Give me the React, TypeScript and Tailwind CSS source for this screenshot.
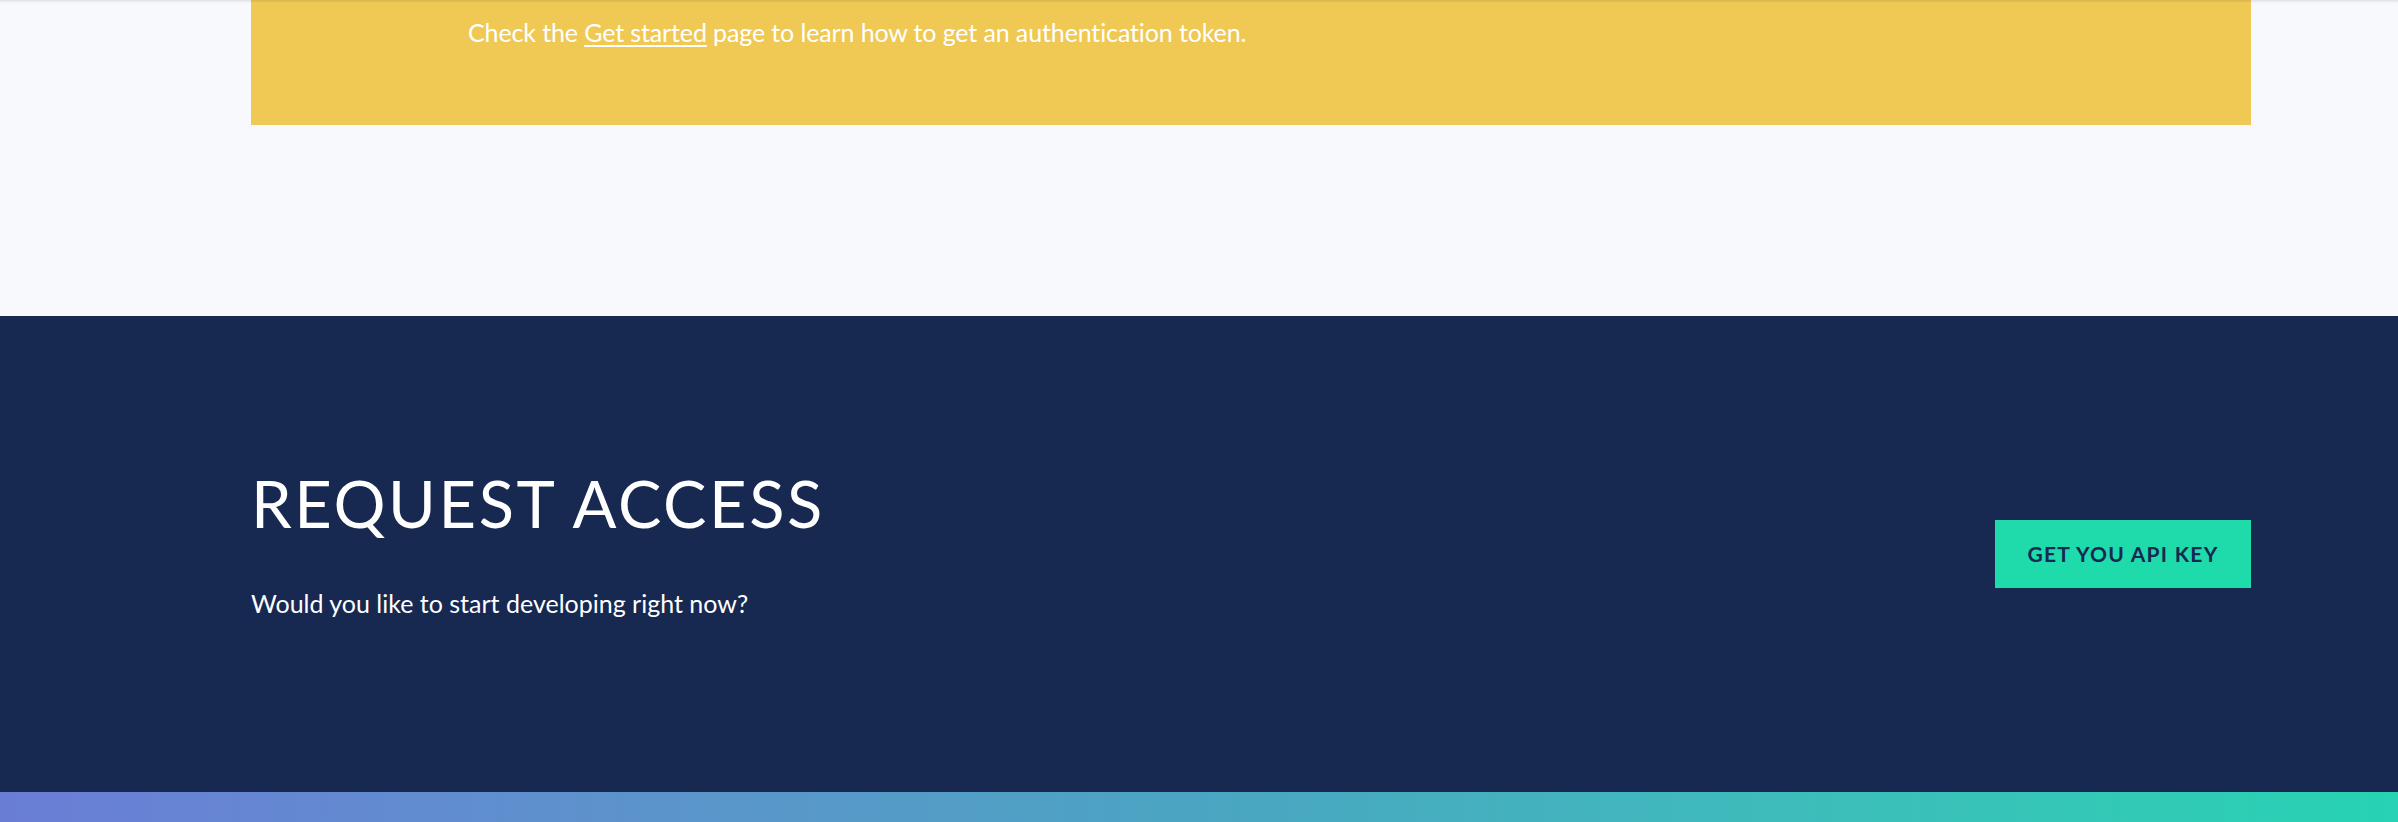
import React from 'react';

const sans = { fontFamily: 'Lato, "Noto Sans", sans-serif' };

export default function App() {
  return (
    <div className="relative min-h-screen w-full bg-[#f7f9fd]" style={sans}>
      {/* header shadow bleeding in from above */}
      <div className="absolute inset-x-0 top-0 h-[3px] bg-gradient-to-b from-black/10 to-transparent" />

      {/* Info banner */}
      <div className="ml-[251px] h-[125px] w-[2000px] bg-[#efc954] pl-[217px] pt-[15px]">
        <p className="text-[25px] leading-[34px] tracking-[-0.005em] text-white">
          Check the{' '}
          <a href="#" className="underline underline-offset-[3px]">
            Get started
          </a>{' '}
          page to learn how to get an authentication token.
        </p>
      </div>

      <div className="h-[191px]" />

      {/* Request access */}
      <section className="h-[476px] bg-[#172851]">
        <div className="ml-[251px] flex h-full w-[2000px] items-center justify-between">
          <div className="pb-[24px]">
            <h2 className="text-[65px] leading-[76px] font-normal tracking-[0.04em] text-white">
              REQUEST ACCESS
            </h2>
            <p className="mt-[46px] text-[25px] leading-[32px] text-white">
              Would you like to start developing right now?
            </p>
          </div>
          <a
            href="#"
            className="flex h-[68px] w-[256px] items-center justify-center bg-[#1fdaab] text-[21px] font-bold tracking-[0.06em] text-[#172851]"
          >
            GET YOU API KEY
          </a>
        </div>
      </section>

      <div className="h-[30px] bg-gradient-to-r from-[#6a7dd6] via-[#4aa5c2] to-[#26d3b2]" />
    </div>
  );
}
